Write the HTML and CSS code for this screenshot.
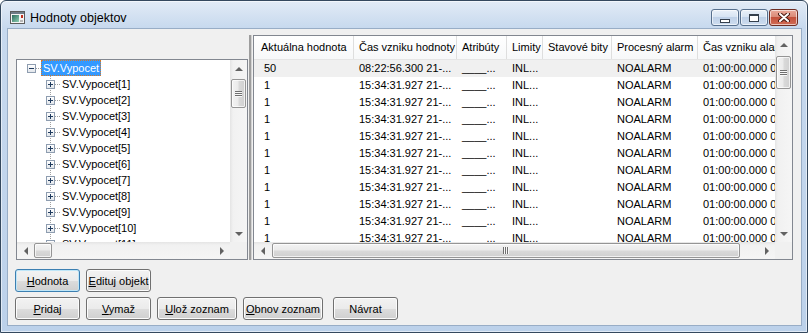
FILE: index.html
```html
<!DOCTYPE html>
<html lang="sk">
<head>
  <meta charset="UTF-8">
  <title>Hodnoty objektov</title>
  <link rel="stylesheet" href="styles.css">
</head>
<body>
  <div class="window">
    <div class="titlebar">
      <svg class="app-icon" width="15" height="13" viewBox="0 0 15 13">
        <defs>
          <linearGradient id="ic" x1="0" y1="0" x2="1" y2="1">
            <stop offset="0" stop-color="#2d6b5e"/>
            <stop offset="1" stop-color="#8ccfb2"/>
          </linearGradient>
        </defs>
        <rect x="0.5" y="0.5" width="14" height="12" fill="#f4f4f4" stroke="#5c5c5c"/>
        <rect x="1" y="1" width="13" height="2" fill="#6f7c88"/>
        <rect x="2" y="4" width="7" height="7" fill="url(#ic)"/>
        <rect x="11" y="4" width="2" height="3" fill="#c03020"/>
        <rect x="10" y="9" width="3" height="2" fill="#b8b8b8"/>
      </svg>
      <span class="title">Hodnoty objektov</span>
      <div class="caption-buttons">
        <div class="cap-btn"><span class="glyph-min"></span></div>
        <div class="cap-btn"><span class="glyph-max"></span></div>
        <div class="cap-btn cap-close">
          <svg width="12" height="9" viewBox="0 0 12 9">
            <path d="M2 1 L10 8 M10 1 L2 8" stroke="#4a1a12" stroke-width="4" stroke-linecap="round"/>
            <path d="M2 1 L10 8 M10 1 L2 8" stroke="#ffffff" stroke-width="2" stroke-linecap="round"/>
          </svg>
        </div>
      </div>
    </div>

    <div class="client">
      <div class="panes">
        <div class="tree-col">
          <div class="tree">
            <div class="tree-main">
              <div class="tree-body">
                <div class="node root"><span class="expander"></span><span class="dots"></span><span class="label selected">SV.Vypocet</span></div>
                <div class="children">
                  <div class="node"><span class="expander plus"></span><span class="dots"></span><span class="label">SV.Vypocet[1]</span></div>
                  <div class="node"><span class="expander plus"></span><span class="dots"></span><span class="label">SV.Vypocet[2]</span></div>
                  <div class="node"><span class="expander plus"></span><span class="dots"></span><span class="label">SV.Vypocet[3]</span></div>
                  <div class="node"><span class="expander plus"></span><span class="dots"></span><span class="label">SV.Vypocet[4]</span></div>
                  <div class="node"><span class="expander plus"></span><span class="dots"></span><span class="label">SV.Vypocet[5]</span></div>
                  <div class="node"><span class="expander plus"></span><span class="dots"></span><span class="label">SV.Vypocet[6]</span></div>
                  <div class="node"><span class="expander plus"></span><span class="dots"></span><span class="label">SV.Vypocet[7]</span></div>
                  <div class="node"><span class="expander plus"></span><span class="dots"></span><span class="label">SV.Vypocet[8]</span></div>
                  <div class="node"><span class="expander plus"></span><span class="dots"></span><span class="label">SV.Vypocet[9]</span></div>
                  <div class="node"><span class="expander plus"></span><span class="dots"></span><span class="label">SV.Vypocet[10]</span></div>
                  <div class="node"><span class="expander plus"></span><span class="dots"></span><span class="label">SV.Vypocet[11]</span></div>
                </div>
              </div>
              <div class="vscroll">
                <div class="sb-btn"><span class="arr arr-up"></span></div>
                <div class="sb-track"><div class="thumb-v tree-thumb"><span class="grip-v"></span></div></div>
                <div class="sb-btn"><span class="arr arr-down"></span></div>
              </div>
            </div>
            <div class="hscroll-row">
              <div class="hscroll">
                <div class="sb-btn"><span class="arr arr-left"></span></div>
                <div class="sb-track"><div class="thumb-h tree-hthumb"></div></div>
                <div class="sb-btn"><span class="arr arr-right"></span></div>
              </div>
              <div class="sb-corner"></div>
            </div>
          </div>
        </div>

        <div class="splitter"></div>

        <div class="list">
          <div class="list-main">
            <div class="list-view">
              <div class="list-header">
                <div class="hcell first">Aktuálna hodnota</div>
                <div class="hcell">Čas vzniku hodnoty</div>
                <div class="hcell">Atribúty</div>
                <div class="hcell">Limity</div>
                <div class="hcell">Stavové bity</div>
                <div class="hcell">Procesný alarm</div>
                <div class="hcell">Čas vzniku alarmu</div>
              </div>
              <div class="list-row selected">
                <div class="cell first">50</div><div class="cell">08:22:56.300 21-...</div><div class="cell">____...</div><div class="cell">INL...</div><div class="cell"></div><div class="cell">NOALARM</div><div class="cell">01:00:00.000 01.01.1970</div>
              </div>
              <div class="list-row">
                <div class="cell first">1</div><div class="cell">15:34:31.927 21-...</div><div class="cell">____...</div><div class="cell">INL...</div><div class="cell"></div><div class="cell">NOALARM</div><div class="cell">01:00:00.000 01.01.1970</div>
              </div>
              <div class="list-row">
                <div class="cell first">1</div><div class="cell">15:34:31.927 21-...</div><div class="cell">____...</div><div class="cell">INL...</div><div class="cell"></div><div class="cell">NOALARM</div><div class="cell">01:00:00.000 01.01.1970</div>
              </div>
              <div class="list-row">
                <div class="cell first">1</div><div class="cell">15:34:31.927 21-...</div><div class="cell">____...</div><div class="cell">INL...</div><div class="cell"></div><div class="cell">NOALARM</div><div class="cell">01:00:00.000 01.01.1970</div>
              </div>
              <div class="list-row">
                <div class="cell first">1</div><div class="cell">15:34:31.927 21-...</div><div class="cell">____...</div><div class="cell">INL...</div><div class="cell"></div><div class="cell">NOALARM</div><div class="cell">01:00:00.000 01.01.1970</div>
              </div>
              <div class="list-row">
                <div class="cell first">1</div><div class="cell">15:34:31.927 21-...</div><div class="cell">____...</div><div class="cell">INL...</div><div class="cell"></div><div class="cell">NOALARM</div><div class="cell">01:00:00.000 01.01.1970</div>
              </div>
              <div class="list-row">
                <div class="cell first">1</div><div class="cell">15:34:31.927 21-...</div><div class="cell">____...</div><div class="cell">INL...</div><div class="cell"></div><div class="cell">NOALARM</div><div class="cell">01:00:00.000 01.01.1970</div>
              </div>
              <div class="list-row">
                <div class="cell first">1</div><div class="cell">15:34:31.927 21-...</div><div class="cell">____...</div><div class="cell">INL...</div><div class="cell"></div><div class="cell">NOALARM</div><div class="cell">01:00:00.000 01.01.1970</div>
              </div>
              <div class="list-row">
                <div class="cell first">1</div><div class="cell">15:34:31.927 21-...</div><div class="cell">____...</div><div class="cell">INL...</div><div class="cell"></div><div class="cell">NOALARM</div><div class="cell">01:00:00.000 01.01.1970</div>
              </div>
              <div class="list-row">
                <div class="cell first">1</div><div class="cell">15:34:31.927 21-...</div><div class="cell">____...</div><div class="cell">INL...</div><div class="cell"></div><div class="cell">NOALARM</div><div class="cell">01:00:00.000 01.01.1970</div>
              </div>
              <div class="list-row">
                <div class="cell first">1</div><div class="cell">15:34:31.927 21-...</div><div class="cell">____...</div><div class="cell">INL...</div><div class="cell"></div><div class="cell">NOALARM</div><div class="cell">01:00:00.000 01.01.1970</div>
              </div>
            </div>
            <div class="vscroll">
              <div class="sb-btn"><span class="arr arr-up"></span></div>
              <div class="sb-track"><div class="thumb-v list-thumb"><span class="grip-v"></span></div></div>
              <div class="sb-btn"><span class="arr arr-down"></span></div>
            </div>
          </div>
          <div class="hscroll-row">
            <div class="hscroll">
              <div class="sb-btn"><span class="arr arr-left"></span></div>
              <div class="sb-track"><div class="thumb-h list-hthumb"><span class="grip-h"></span></div></div>
              <div class="sb-btn"><span class="arr arr-right"></span></div>
            </div>
            <div class="sb-corner"></div>
          </div>
        </div>
      </div>

      <div class="btn-row first-row">
        <button class="btn default"><u>H</u>odnota</button>
        <button class="btn"><u>E</u>dituj objekt</button>
      </div>
      <div class="btn-row">
        <button class="btn"><u>P</u>ridaj</button>
        <button class="btn"><u>V</u>ymaž</button>
        <button class="btn wide"><u>U</u>lož zoznam</button>
        <button class="btn wide"><u>O</u>bnov zoznam</button>
        <button class="btn back">Návrat</button>
      </div>
    </div>
  </div>
</body>
</html>
```

FILE: styles.css
```css
* {
  box-sizing: border-box;
}
body {
  margin: 0;
  font-family: "Liberation Sans", Arial, sans-serif;
  font-size: 11px;
  color: #000;
  background: #fff;
}

/* window frame */
.window {
  width: 808px;
  height: 333px;
  border: 1px solid #34485e;
  border-radius: 6px 6px 0 0;
  background: linear-gradient(#e2ebf6, #c7d9ee 27px, #bcd1ea);
  box-shadow: inset 0 0 0 1px rgba(255, 255, 255, 0.55);
  padding: 0 5px 6px 6px;
  display: flex;
  flex-direction: column;
}
.titlebar {
  height: 27px;
  padding-top: 6px;
  display: flex;
  align-items: center;
}
.app-icon {
  margin-left: 3px;
  flex: none;
}
.title {
  margin-left: 5px;
  font-size: 12.5px;
  flex: 1;
}
.caption-buttons {
  display: flex;
  gap: 1px;
  margin-right: 4px;
}
.cap-btn {
  width: 28px;
  height: 17px;
  border: 1px solid #566f8d;
  border-radius: 3px;
  background: linear-gradient(#eaf1f9, #d7e4f3 45%, #bfd1e8 50%, #cddcef);
  box-shadow: inset 0 0 0 1px rgba(255, 255, 255, 0.6);
  display: flex;
  align-items: center;
  justify-content: center;
}
.cap-close {
  width: 29px;
  border-color: #6e2d22;
  background: linear-gradient(#eaa999, #da8b78 45%, #c4513b 50%, #d06c55);
}
.glyph-min {
  width: 10px;
  height: 4px;
  margin-top: 6px;
  background: #fff;
  border: 1px solid #35404d;
}
.glyph-max {
  width: 10px;
  height: 8px;
  background: #fff;
  border: 1px solid #35404d;
  border-top-width: 2px;
}

/* client area */
.client {
  flex: 1;
  border: 1px solid #98adc6;
  background: #f0f0f0;
  padding: 6px 8px 0 8px;
}
.panes {
  display: flex;
  height: 225px;
}
.tree-col {
  width: 232px;
  padding-top: 24px;
}
.tree {
  height: 201px;
  border: 1px solid #828790;
  background: #fff;
  display: flex;
  flex-direction: column;
}
.tree-main {
  display: flex;
  height: 182px;
}
.tree-body {
  flex: 1;
  overflow: hidden;
}
.node {
  display: flex;
  align-items: center;
  height: 16px;
  padding-left: 29px;
  white-space: nowrap;
}
.node.root {
  padding-left: 10px;
}
.children {
  background: repeating-linear-gradient(to bottom, #a0a0a0 0 1px, transparent 1px 2px) 33px 0 / 1px 100% no-repeat;
}
.expander {
  width: 9px;
  height: 9px;
  flex: none;
  position: relative;
  border: 1px solid #8e9db0;
  background: linear-gradient(#fff, #e2e6eb);
}
.expander::before {
  content: "";
  position: absolute;
  left: 1px;
  top: 3px;
  width: 5px;
  height: 1px;
  background: #1f3b5e;
}
.expander.plus::after {
  content: "";
  position: absolute;
  left: 3px;
  top: 1px;
  width: 1px;
  height: 5px;
  background: #1f3b5e;
}
.dots {
  width: 5px;
  height: 1px;
  flex: none;
  background: repeating-linear-gradient(to right, #a0a0a0 0 1px, transparent 1px 2px);
}
.label {
  height: 16px;
  line-height: 14px;
  padding: 0 1px;
  border: 1px solid transparent;
}
.label.selected {
  background: #3399ff;
  color: #fff;
  border: 1px dotted #d27a2c;
}

/* splitter */
.splitter {
  width: 5px;
  background: linear-gradient(to right, transparent 1px, #9d9d9d 1px 3px, #d2d2d2 3px 4px, transparent 4px);
}

/* list view */
.list {
  width: 540px;
  border: 1px solid #828790;
  background: #fff;
  display: flex;
  flex-direction: column;
}
.list-main {
  display: flex;
  flex: 1;
  min-height: 0;
}
.list-view {
  flex: 1;
  overflow: hidden;
}
.list-header,
.list-row {
  display: grid;
  grid-template-columns: 100px 103px 50px 36px 69px 86px 140px;
  width: max-content;
}
.list-header {
  height: 24px;
  background: linear-gradient(#ffffff, #f7f8f9);
  border-bottom: 1px solid #e5e5e5;
}
.hcell {
  line-height: 23px;
  padding-left: 5px;
  border-right: 1px solid #dedede;
  white-space: nowrap;
  overflow: hidden;
}
.hcell.first {
  padding-left: 7px;
}
.list-row {
  height: 17px;
  line-height: 17px;
}
.list-row.selected {
  background: #f0f0f0;
}
.cell {
  padding-left: 5px;
  white-space: nowrap;
  overflow: hidden;
}
.cell.first {
  padding-left: 10px;
}

/* scrollbars */
.vscroll {
  width: 17px;
  flex: none;
  display: flex;
  flex-direction: column;
  background: linear-gradient(to right, #e4e4e4, #f1f1f1 3px, #f5f5f5);
}
.hscroll-row {
  height: 17px;
  display: flex;
}
.hscroll {
  flex: 1;
  display: flex;
  background: linear-gradient(#e4e4e4, #f1f1f1 3px, #f5f5f5);
}
.sb-corner {
  width: 17px;
  background: #f0f0f0;
}
.sb-btn {
  width: 17px;
  height: 17px;
  flex: none;
  display: flex;
  align-items: center;
  justify-content: center;
}
.sb-track {
  flex: 1;
}
.arr {
  width: 0;
  height: 0;
  border-style: solid;
}
.arr-up {
  border-width: 0 4px 4px 4px;
  border-color: transparent transparent #626262 transparent;
}
.arr-down {
  border-width: 4px 4px 0 4px;
  border-color: #626262 transparent transparent transparent;
}
.arr-left {
  border-width: 4px 4px 4px 0;
  border-color: transparent #626262 transparent transparent;
}
.arr-right {
  border-width: 4px 0 4px 4px;
  border-color: transparent transparent transparent #626262;
}
.thumb-v {
  margin: 0 1px;
  border: 1px solid #959595;
  border-radius: 2px;
  background: linear-gradient(to right, #f3f3f3, #ebebeb 45%, #d9d9d9 55%, #d0d0d0);
  box-shadow: inset 0 0 0 1px rgba(255, 255, 255, 0.7);
  display: flex;
  align-items: center;
  justify-content: center;
}
.tree-thumb {
  margin-top: 2px;
  height: 29px;
}
.list-thumb {
  margin-top: 3px;
  height: 33px;
}
.thumb-h {
  height: 15px;
  margin-top: 1px;
  border: 1px solid #959595;
  border-radius: 2px;
  background: linear-gradient(#f3f3f3, #ebebeb 45%, #d9d9d9 55%, #d0d0d0);
  box-shadow: inset 0 0 0 1px rgba(255, 255, 255, 0.7);
  display: flex;
  align-items: center;
  justify-content: center;
}
.tree-hthumb {
  width: 18px;
}
.list-hthumb {
  width: 468px;
  margin-left: 1px;
}
.grip-v {
  width: 7px;
  height: 6px;
  background: repeating-linear-gradient(to bottom, #6f6f6f 0 1px, #f8f8f8 1px 2px);
}
.grip-h {
  width: 6px;
  height: 7px;
  background: repeating-linear-gradient(to right, #6f6f6f 0 1px, #f8f8f8 1px 2px);
}

/* buttons */
.btn-row {
  display: flex;
  gap: 6px;
  margin-top: 5px;
  margin-left: -1px;
}
.btn-row.first-row {
  margin-top: 9px;
}
.btn {
  width: 65px;
  height: 23px;
  padding: 0;
  border: 1px solid #707070;
  border-radius: 3px;
  background: linear-gradient(#f2f2f2, #ebebeb 50%, #dddddd 51%, #cfcfcf);
  box-shadow: inset 0 0 0 1px #fcfcfc;
  font-family: "Liberation Sans", Arial, sans-serif;
  font-size: 11px;
  color: #000;
}
.btn.default {
  border-color: #3c7fb1;
  box-shadow: inset 0 0 0 1px #bfe6f8;
}
.btn.wide {
  width: 80px;
}
.btn.back {
  margin-left: 4px;
}
```
